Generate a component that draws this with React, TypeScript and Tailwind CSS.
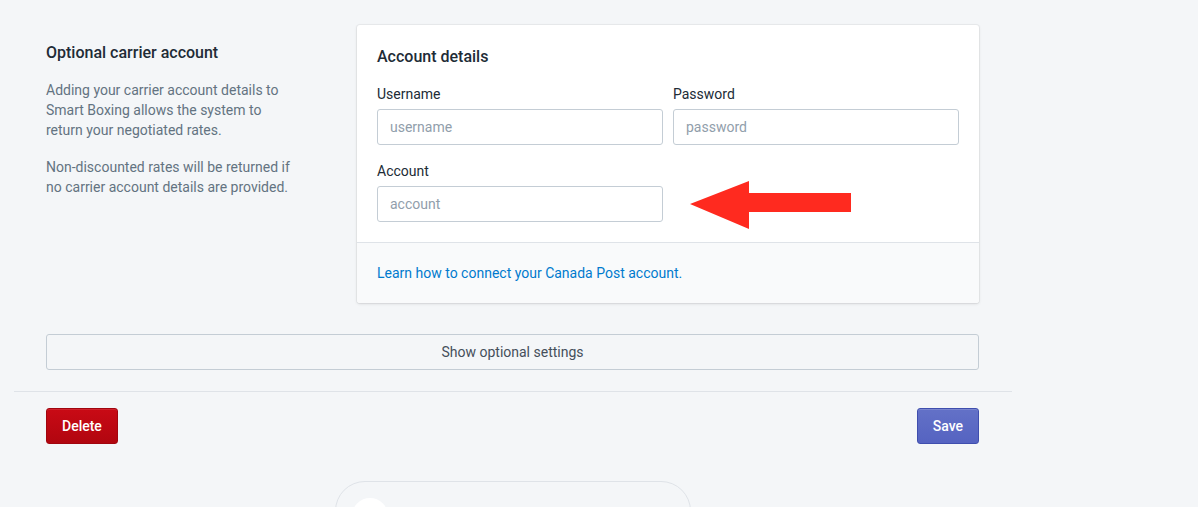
import { ChevronDown } from "lucide-react";

const font = { fontFamily: '"Segoe UI", Roboto, "Noto Sans", sans-serif' };

function Field({ label, placeholder }: { label: string; placeholder: string }) {
  return (
    <div className="flex-1">
      <label className="block text-sm leading-5 text-[#212b36] mb-[5px]">{label}</label>
      <input
        placeholder={placeholder}
        className="w-full h-9 px-3 text-sm bg-white border border-[#c4cdd5] rounded-[3px] text-[#212b36] placeholder:text-[#919eab] outline-none"
      />
    </div>
  );
}

export default function App() {
  return (
    <div className="relative h-[507px] bg-[#f4f6f8] overflow-hidden" style={font}>
      <div className="ml-[14px] w-[997px]">
        <div className="px-8 pt-[25px]">
          {/* Annotated section */}
          <div className="flex">
            <div className="w-[311px] shrink-0 pt-4 pr-[60px]">
              <h2 className="text-base leading-6 font-medium text-[#212b36]">Optional carrier account</h2>
              <div className="mt-[15px] text-sm leading-5 text-[#637381] space-y-[17px]">
                <p>Adding your carrier account details to Smart Boxing allows the system to return your negotiated rates.</p>
                <p>Non-discounted rates will be returned if no carrier account details are provided.</p>
              </div>
            </div>

            <div className="flex-1 bg-white rounded-[3px] shadow-[0_0_0_1px_rgba(63,63,68,0.05),0_1px_3px_0_rgba(63,63,68,0.15)]">
              <div className="px-5 pt-5 pb-5">
                <h3 className="text-base leading-6 font-medium text-[#212b36]">Account details</h3>
                <div className="mt-[15px] flex gap-[10px]">
                  <Field label="Username" placeholder="username" />
                  <Field label="Password" placeholder="password" />
                </div>
                <div className="mt-4 flex gap-[10px]">
                  <Field label="Account" placeholder="account" />
                  <div className="flex-1" />
                </div>
              </div>
              <div className="border-t border-[#dfe3e8] bg-[#f9fafb] px-5 py-5 rounded-b-[3px] text-sm leading-5">
                <a className="text-[#007ace] cursor-pointer">Learn how to connect your Canada Post account.</a>
              </div>
            </div>
          </div>

          <button className="mt-[31px] w-full h-9 border border-[#c4cdd5] rounded-[3px] bg-[#f4f6f8] text-sm text-[#454f5b] flex items-center justify-center">
            Show optional settings
          </button>
        </div>

        <div className="mt-[21px] w-[998px] border-t border-[#dfe3e8]" />

        <div className="px-8 pt-4 flex justify-between">
          <button className="h-9 px-[15px] rounded-[3px] text-sm font-medium text-white border border-[#a1050e] bg-gradient-to-b from-[#c90a15] to-[#b1060f] shadow-[inset_0_1px_0_0_rgba(255,255,255,0.1)]">
            Delete
          </button>
          <button className="h-9 px-[15px] rounded-[3px] text-sm font-medium text-white border border-[#3f4eae] bg-gradient-to-b from-[#6371c7] to-[#5563c1] shadow-[inset_0_1px_0_0_rgba(255,255,255,0.15)]">
            Save
          </button>
        </div>

        <div className="mt-[37px] ml-[321px] w-[356px] h-[60px] rounded-[30px] border border-[#dfe3e8] bg-[#f4f6f8] flex items-start pl-4 pt-4">
          <div className="w-9 h-9 rounded-full bg-white flex items-center justify-center">
            <ChevronDown className="w-4 h-4 text-[#47c1bf]" />
          </div>
        </div>
      </div>

      {/* red arrow annotation */}
      <svg className="absolute left-[689px] top-[180px]" width="164" height="50" viewBox="0 0 164 50">
        <polygon points="1,24 60,1 60,13 162,13 162,32 60,32 60,49" fill="#ff2a1f" />
      </svg>
    </div>
  );
}
